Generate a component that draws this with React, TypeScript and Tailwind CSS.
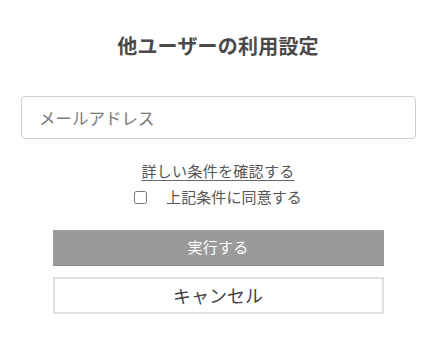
export default function App() {
  return (
    <main
      className="w-[436px] h-[345px] bg-white text-[#555]"
      style={{ fontFamily: '"Noto Sans CJK JP", "Noto Sans", sans-serif' }}
    >
      <div className="flex flex-col items-center pt-[33px]">
        <h1 className="text-[20px] leading-[26px] font-bold tracking-[0.2px] text-[#4a4a4a]">
          他ユーザーの利用設定
        </h1>

        <input
          type="text"
          placeholder="メールアドレス"
          className="mt-[37px] ml-[1px] w-[395px] h-[43px] rounded-[4px] border border-[#d0d0d0] px-[17px] text-[16.5px] tracking-[0px] text-[#444] placeholder:text-[#7a7a7a] outline-none"
        />

        <a
          href="#"
          className="mt-[23px] text-[15px] leading-[18px] tracking-[0.3px] text-[#555] underline underline-offset-[3px] decoration-[#666]"
        >
          詳しい条件を確認する
        </a>

        <label className="mt-[8px] flex items-center text-[15px] leading-[18px] tracking-[0.1px] text-[#555]">
          <input type="checkbox" className="w-[13px] h-[13px] m-0 mr-[19px]" />
          上記条件に同意する
        </label>

        <button className="mt-[24px] w-[331px] h-[36px] bg-[#9a9a9a] border-b border-[#8f8f8f] text-white text-[15px] tracking-[0.2px]">
          実行する
        </button>

        <button className="mt-[11px] w-[331px] h-[37px] bg-white border-2 border-[#e0e0e0] text-[#444] text-[18px] tracking-[0px]">
          キャンセル
        </button>
      </div>
    </main>
  )
}
